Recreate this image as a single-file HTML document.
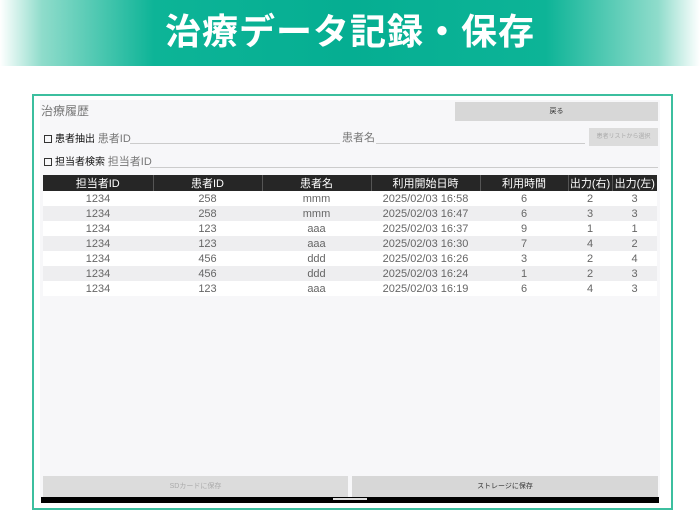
<!DOCTYPE html>
<html><head><meta charset="utf-8"><style>
*{margin:0;padding:0;box-sizing:border-box}
body{width:700px;height:525px;background:#fff;position:relative;overflow:hidden;font-family:"Liberation Sans","Noto Sans CJK JP",sans-serif}
.ban{position:absolute;left:0;top:0;width:700px;height:66px;background:linear-gradient(90deg,#fff 0%,#8fdccb 6%,#0db497 22%,#05ae92 50%,#0db497 78%,#8fdccb 94%,#fff 100%)}
.ban h1{position:absolute;left:0;right:0;top:10px;text-align:center;color:#fff;font-size:36px;font-weight:bold;letter-spacing:1px;line-height:44px}
.frame{position:absolute;left:32px;top:94px;width:641px;height:416px;border:2px solid #3cbf9f;background:#fff}
.in{position:absolute;left:40px;top:100px;width:620px;height:398px;background:#f7f7f9}
.a{position:absolute;white-space:nowrap}
.g{color:#777}
.btn{position:absolute;background:#d7d7d7;text-align:center;font-size:7px;color:#333}
.line{position:absolute;height:1px;background:#ccc}
.cb{display:inline-block;width:8px;height:8px;border:1px solid #333;margin-right:3px;vertical-align:-1px}
table{position:absolute;left:43px;top:175px;width:614px;border-collapse:collapse;font-size:11px}
th{background:#262626;color:#fff;font-weight:normal;height:15px;padding:0;border-right:1px solid #555}
td{height:15px;padding:0;text-align:center;color:#666}
tr:nth-child(odd) td{background:#eeeef0}
tr:nth-child(even) td{background:#fff}
</style></head><body>
<div class="ban"><h1>治療データ記録・保存</h1></div>
<div class="frame"></div>
<div class="in"></div>
<div class="a g" style="left:41px;top:102px;font-size:12px">治療履歴</div>
<div class="btn" style="left:455px;top:102px;width:203px;height:19px;line-height:19px">戻る</div>
<div class="a" style="left:44px;top:130px;font-size:10px;color:#111"><span class="cb"></span>患者抽出 <span class="g" style="font-size:11px">患者ID</span></div>
<div class="line" style="left:130px;top:143px;width:210px"></div>
<div class="a g" style="left:342px;top:129px;font-size:11px">患者名</div>
<div class="line" style="left:376px;top:143px;width:209px"></div>
<div class="btn" style="left:589px;top:128px;width:69px;height:18px;line-height:18px;background:#dcdcdc;color:#aaa;font-size:6px">患者リストから選択</div>
<div class="a" style="left:44px;top:153px;font-size:10px;color:#111"><span class="cb"></span>担当者検索 <span class="g" style="font-size:11px">担当者ID</span></div>
<div class="line" style="left:150px;top:167px;width:508px"></div>
<table>
<tr><th style="width:110px">担当者ID</th><th style="width:109px">患者ID</th><th style="width:109px">患者名</th><th style="width:109px">利用開始日時</th><th style="width:88px">利用時間</th><th style="width:44px">出力(右)</th><th style="width:45px;border:0">出力(左)</th></tr>
<tr><td>1234</td><td>258</td><td>mmm</td><td>2025/02/03 16:58</td><td>6</td><td>2</td><td>3</td></tr>
<tr><td>1234</td><td>258</td><td>mmm</td><td>2025/02/03 16:47</td><td>6</td><td>3</td><td>3</td></tr>
<tr><td>1234</td><td>123</td><td>aaa</td><td>2025/02/03 16:37</td><td>9</td><td>1</td><td>1</td></tr>
<tr><td>1234</td><td>123</td><td>aaa</td><td>2025/02/03 16:30</td><td>7</td><td>4</td><td>2</td></tr>
<tr><td>1234</td><td>456</td><td>ddd</td><td>2025/02/03 16:26</td><td>3</td><td>2</td><td>4</td></tr>
<tr><td>1234</td><td>456</td><td>ddd</td><td>2025/02/03 16:24</td><td>1</td><td>2</td><td>3</td></tr>
<tr><td>1234</td><td>123</td><td>aaa</td><td>2025/02/03 16:19</td><td>6</td><td>4</td><td>3</td></tr>
</table>
<div class="btn" style="left:43px;top:476px;width:305px;height:21px;line-height:21px;background:#dcdcdc;color:#aaa">SDカードに保存</div>
<div class="btn" style="left:352px;top:476px;width:306px;height:21px;line-height:21px">ストレージに保存</div>
<div class="a" style="left:41px;top:497px;width:618px;height:6px;background:#000"></div>
<div class="a" style="left:333px;top:498px;width:34px;height:2px;background:#ddd"></div>
</body></html>
